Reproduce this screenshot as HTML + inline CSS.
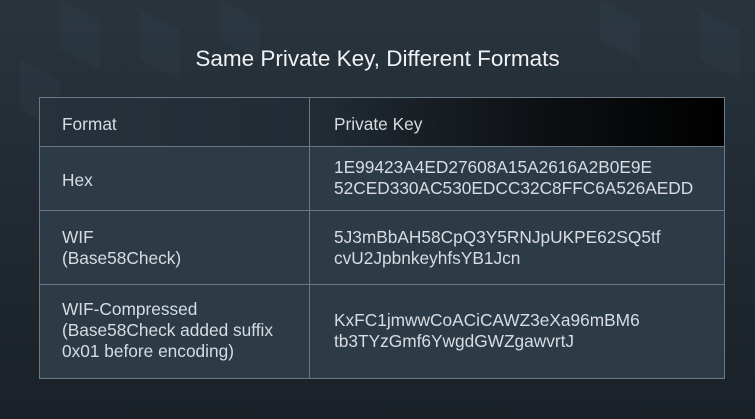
<!DOCTYPE html>
<html><head><style>
html,body{margin:0;padding:0}
body{width:755px;height:419px;overflow:hidden;position:relative;
background:linear-gradient(180deg,#29343d 0%,#212a32 50%,#1a2128 100%);
font-family:"Liberation Sans",sans-serif;color:#dfe4e8}
.bg{position:absolute;left:0;top:0;width:755px;height:419px;opacity:.35}
h1{position:absolute;top:46px;left:0;width:755px;text-align:center;margin:0;font-weight:normal;font-size:22.5px;color:#f0f2f4}
.t{position:absolute;left:39px;top:97px;width:684px;height:280px;border:1px solid #6a7886;background:#2d3b47}
.h{position:absolute;left:0;top:0;width:684px;height:48px;background:linear-gradient(90deg,#26313b 0%,#222c35 40%,#0c0f12 75%,#000 100%);border-bottom:1px solid #6a7886}
.v{position:absolute;left:269px;top:0;width:1px;height:280px;background:#6a7886}
.r{position:absolute;left:0;width:684px;height:1px;background:#6a7886}
.c{position:absolute;font-size:17.3px;line-height:21px;color:#d6dce1}
</style></head><body>
<svg class="bg" viewBox="0 0 755 419">
<g fill="#3a4753" opacity=".6">
<polygon points="60,0 100,20 100,70 60,50"/><polygon points="140,10 180,30 180,80 140,60"/>
<polygon points="20,60 60,80 60,130 20,110"/><polygon points="220,0 260,20 260,60 220,40"/>
<polygon points="600,0 640,20 640,60 600,40"/><polygon points="700,10 740,30 740,80 700,60"/>
</g></svg>
<h1>Same Private Key, Different Formats</h1>
<div class="t">
<div class="h"></div>
<div class="v"></div>
<div class="r" style="top:112px"></div>
<div class="r" style="top:186px"></div>
<div class="c" style="left:22px;top:16px">Format</div>
<div class="c" style="left:294px;top:16px">Private Key</div>
<div class="c" style="left:22px;top:72px">Hex</div>
<div class="c" style="left:294px;top:59px">1E99423A4ED27608A15A2616A2B0E9E<br>52CED330AC530EDCC32C8FFC6A526AEDD</div>
<div class="c" style="left:22px;top:129px">WIF<br>(Base58Check)</div>
<div class="c" style="left:294px;top:129px">5J3mBbAH58CpQ3Y5RNJpUKPE62SQ5tf<br>cvU2JpbnkeyhfsYB1Jcn</div>
<div class="c" style="left:22px;top:201px">WIF-Compressed<br>(Base58Check added suffix<br>0x01 before encoding)</div>
<div class="c" style="left:294px;top:212px">KxFC1jmwwCoACiCAWZ3eXa96mBM6<br>tb3TYzGmf6YwgdGWZgawvrtJ</div>
</div>
</body></html>
